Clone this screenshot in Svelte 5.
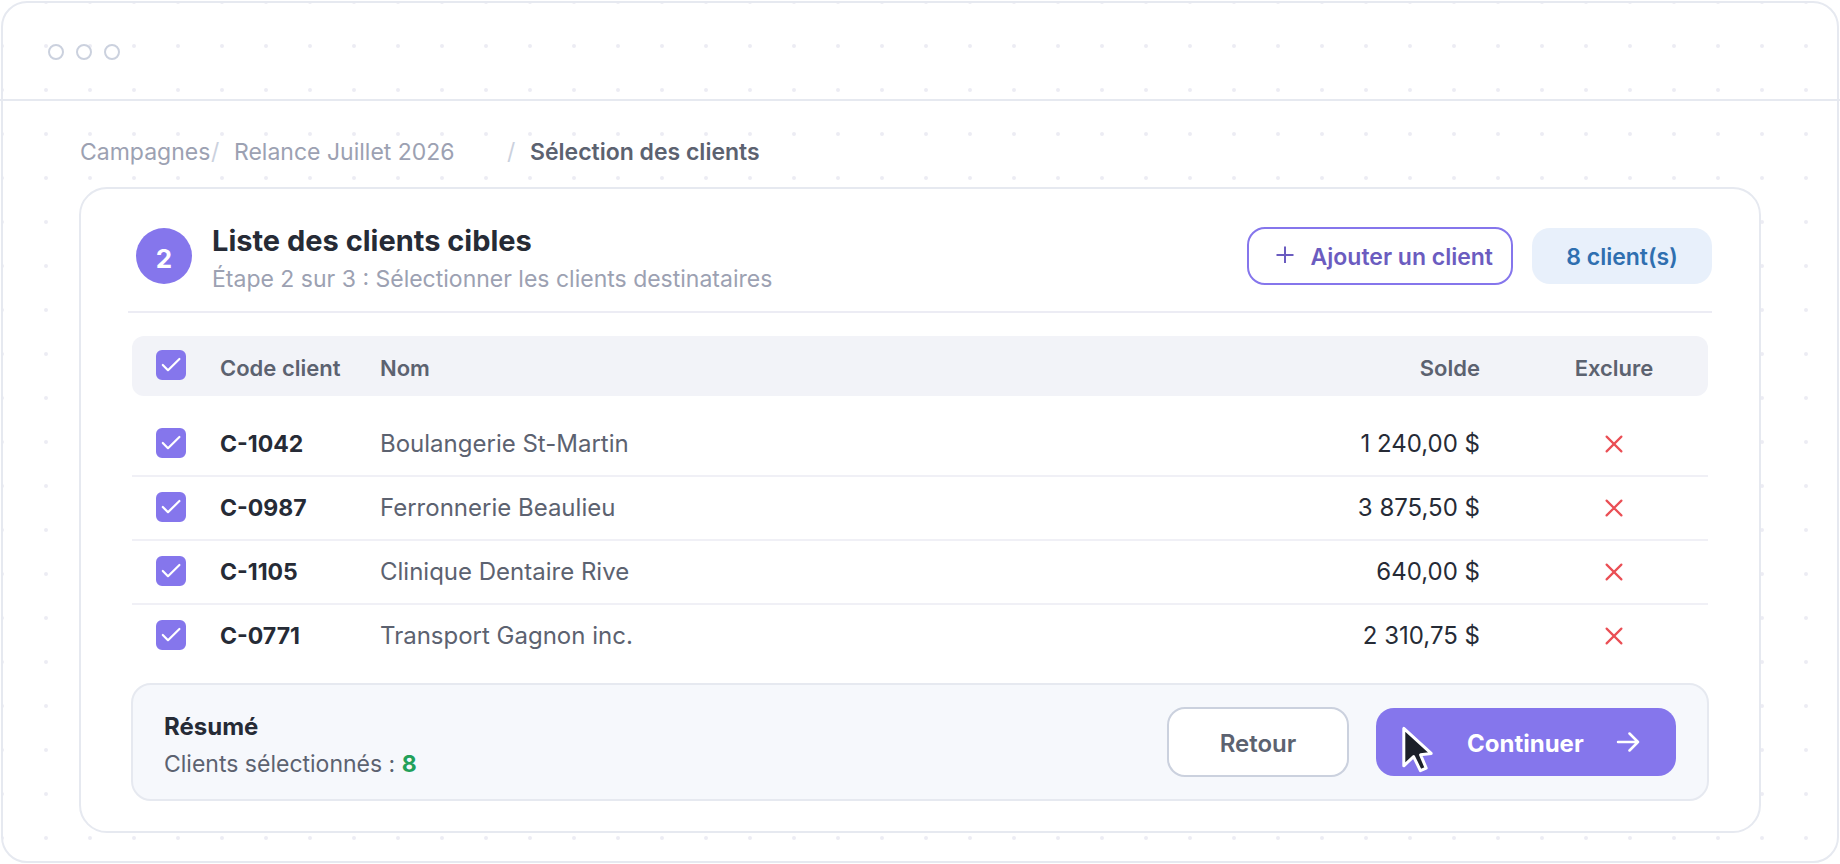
<script>
  let clients = $state([
    { code: 'C-1042', nom: 'Boulangerie St-Martin', solde: '1 240,00 $', selected: true },
    { code: 'C-0987', nom: 'Ferronnerie Beaulieu', solde: '3 875,50 $', selected: true },
    { code: 'C-1105', nom: 'Clinique Dentaire Rive', solde: '640,00 $', selected: true },
    { code: 'C-0771', nom: 'Transport Gagnon inc.', solde: '2 310,75 $', selected: true }
  ]);
  const total = 8;

  let allSelected = $derived(clients.every((c) => c.selected));

  function toggleAll(event) {
    const value = event.currentTarget.checked;
    for (const c of clients) c.selected = value;
  }

  function exclude(code) {
    clients = clients.filter((c) => c.code !== code);
  }
</script>

<div class="window">
  <header class="titlebar">
    <span class="light"></span>
    <span class="light"></span>
    <span class="light"></span>
  </header>

  <main>
    <nav class="crumbs">
      <a class="first" href="#campagnes">Campagnes</a>
      <span class="sep">/</span>
      <a class="second" href="#relance">Relance Juillet 2026</a>
      <span class="sep">/</span>
      <span class="current">Sélection des clients</span>
    </nav>

    <section class="card">
      <div class="card-head">
        <span class="step">2</span>
        <div class="titles">
          <h1>Liste des clients cibles</h1>
          <p>Étape 2 sur 3 : Sélectionner les clients destinataires</p>
        </div>
        <button class="add" type="button">
          <svg width="18" height="20" viewBox="0 0 18 20" fill="none" stroke="currentColor" stroke-width="2">
            <path d="M9 0.5V17M0.5 9H17.5" />
          </svg>
          <span class="label">Ajouter un client</span>
        </button>
        <span class="count">{total} client(s)</span>
      </div>

      <table>
        <thead>
          <tr>
            <th class="check">
              <input type="checkbox" aria-labelledby="col-code" checked={allSelected} onchange={toggleAll} />
            </th>
            <th class="code" id="col-code">Code client</th>
            <th class="nom">Nom</th>
            <th class="solde">Solde</th>
            <th class="exclure" id="col-exclure">Exclure</th>
          </tr>
        </thead>
        <tbody>
          {#each clients as client (client.code)}
            <tr>
              <td class="check">
                <input type="checkbox" aria-labelledby={client.code} bind:checked={client.selected} />
              </td>
              <td class="code" id={client.code}>{client.code}</td>
              <td class="nom">{client.nom}</td>
              <td class="solde">{client.solde}</td>
              <td class="exclure">
                <button
                  class="remove"
                  type="button"
                  aria-labelledby="col-exclure {client.code}"
                  onclick={() => exclude(client.code)}
                >
                  <svg width="18" height="18" viewBox="0 0 18 18" fill="none" stroke="currentColor" stroke-width="2.2" stroke-linecap="round">
                    <path d="M1.6 1.6L16.4 16.4M16.4 1.6L1.6 16.4" />
                  </svg>
                </button>
              </td>
            </tr>
          {/each}
        </tbody>
      </table>

      <footer class="summary">
        <div class="recap">
          <h2>Résumé</h2>
          <p>Clients sélectionnés : <strong>{total}</strong></p>
        </div>
        <button class="back" type="button"><span class="label">Retour</span></button>
        <button class="next" type="button">
          <span class="label">Continuer</span>
          <svg class="arrow" width="24" height="20" viewBox="0 0 24 20" fill="none" stroke="currentColor" stroke-width="2.5" stroke-linecap="round" stroke-linejoin="round">
            <path d="M2 10H22M13.5 1.5L22 10L13.5 18.5" />
          </svg>
          <svg class="pointer" width="36" height="50" viewBox="0 0 36 50" fill="#1c2029" stroke="#ffffff" stroke-width="3" stroke-linejoin="round">
            <path d="M3.8 4.4V41.8L13.6 32.6L20.4 46.6L26.2 44.2L20.6 30.8L31.2 29.4Z" />
          </svg>
        </button>
      </footer>
    </section>
  </main>
</div>

<style>
  :global(body) {
    background: #ffffff;
    font-family: Inter, 'Liberation Sans', sans-serif;
    color: #262b36;
  }

  * {
    box-sizing: border-box;
  }

  h1,
  h2,
  p {
    margin: 0;
  }

  button {
    font-family: inherit;
    cursor: pointer;
  }

  svg {
    display: block;
    flex: none;
  }

  .window {
    min-height: calc(100vh - 2px);
    margin: 1px;
    border: 2px solid #e6e9f0;
    border-radius: 26px;
    background-color: #ffffff;
    background-image: url("data:image/svg+xml,%3Csvg xmlns='http://www.w3.org/2000/svg' width='44' height='44'%3E%3Ccircle cx='22' cy='22' r='2' fill='%23ececf4'/%3E%3C/svg%3E");
    background-position: 21px 21px;
  }

  .titlebar {
    display: flex;
    gap: 12px;
    margin: 0 -3px;
    padding: 41px 48px 39px;
    border-bottom: 2px solid #e6e9f0;
  }

  .light {
    width: 16px;
    height: 16px;
    border: 2px solid #cbd1de;
    border-radius: 50%;
  }

  main {
    padding: 0 76px 28px;
  }

  .crumbs {
    display: flex;
    padding: 36px 1px 20px;
    font-size: 23px;
    line-height: 30px;
    color: #9ca1b2;
  }

  .crumbs a {
    color: inherit;
    text-decoration: none;
    white-space: nowrap;
  }

  .first {
    min-width: 131px;
  }

  .second {
    min-width: 273px;
  }

  .sep {
    width: 23px;
    color: #cbd1de;
  }

  .current {
    font-weight: 600;
    color: #5c6270;
  }

  .card {
    padding: 0 47px 30px;
    border: 2px solid #e6e9f0;
    border-radius: 28px;
    background: #ffffff;
  }

  .card-head {
    display: flex;
    align-items: center;
    padding: 28px 0 16px 8px;
    border-bottom: 2px solid #ececf4;
  }

  .step {
    display: grid;
    place-items: center;
    width: 56px;
    height: 56px;
    padding-top: 4px;
    border-radius: 50%;
    background: #8576ec;
    color: #ffffff;
    font-size: 26px;
    font-weight: 700;
  }

  .titles {
    flex: 1;
    padding: 4px 0 0 20px;
  }

  h1 {
    margin-bottom: 2px;
    font-size: 29px;
    font-weight: 700;
    line-height: 40px;
  }

  .titles p {
    font-size: 23px;
    line-height: 32px;
    color: #9ca1b2;
  }

  .label {
    padding-top: 2px;
  }

  .add {
    display: flex;
    align-items: center;
    justify-content: space-between;
    gap: 16px;
    min-width: 266px;
    height: 58px;
    margin-right: 19px;
    padding: 0 18px 0 27px;
    border: 2px solid #8576ec;
    border-radius: 18px;
    background: #ffffff;
    color: #6b5cc0;
    font-size: 23px;
    font-weight: 600;
  }

  .count {
    display: grid;
    place-items: center;
    min-width: 180px;
    height: 56px;
    padding-top: 2px;
    border-radius: 18px;
    background: #e8f0fb;
    color: #2f6fb0;
    font-size: 23px;
    font-weight: 600;
  }

  table {
    width: calc(100% - 8px);
    margin: 23px 4px 0;
    border-spacing: 0;
    table-layout: fixed;
    font-size: 24px;
  }

  th,
  td {
    padding: 0;
    text-align: left;
  }

  th {
    height: 60px;
    padding-top: 4px;
    background: #f2f3f8;
    color: #5c6270;
    font-size: 22px;
    font-weight: 600;
  }

  th:first-child {
    padding-top: 0;
    border-radius: 12px 0 0 12px;
  }

  th:last-child {
    border-radius: 0 12px 12px 0;
  }

  tbody::before {
    content: '';
    display: block;
    height: 17px;
  }

  td {
    height: 64px;
    border-bottom: 2px solid #f0f0f6;
  }

  tr:last-child td {
    height: 62px;
    border-bottom: 0;
  }

  th.check,
  td.check {
    width: 88px;
    padding-left: 24px;
  }

  .code {
    width: 160px;
  }

  td.code {
    font-size: 23px;
    font-weight: 700;
  }

  td.nom,
  td.solde {
    padding-bottom: 2px;
  }

  td.nom {
    color: #5c6270;
  }

  th.solde,
  td.solde {
    width: 260px;
    padding-right: 40px;
    text-align: right;
  }

  th.exclure,
  td.exclure {
    width: 188px;
    text-align: center;
  }

  input {
    display: block;
    appearance: none;
    width: 30px;
    height: 30px;
    margin: 0 0 2px;
    border: 2px solid #8576ec;
    border-radius: 6px;
    background: #ffffff;
  }

  input:checked {
    background: #8576ec
      url("data:image/svg+xml,%3Csvg xmlns='http://www.w3.org/2000/svg' width='30' height='30' fill='none' stroke='white' stroke-width='2.2' stroke-linecap='round' stroke-linejoin='round'%3E%3Cpath d='M6.8 15L12 20.2L23.4 9'/%3E%3C/svg%3E")
      center / 30px 30px no-repeat border-box;
  }

  .remove {
    display: block;
    margin: 0 auto;
    padding: 0;
    border: 0;
    background: none;
    color: #ea4f55;
  }

  .summary {
    display: flex;
    align-items: center;
    margin: 16px 3px 0;
    padding: 16px 31px;
    border: 2px solid #e6e9f0;
    border-radius: 20px;
    background: #f6f8fc;
  }

  .recap {
    flex: 1;
    padding-top: 8px;
    font-size: 23px;
    line-height: 38px;
    color: #5c6270;
  }

  h2 {
    font-size: 24px;
    font-weight: 700;
    line-height: 36px;
    color: #262b36;
  }

  strong {
    font-weight: 700;
    color: #22a05a;
  }

  .back,
  .next {
    border-radius: 18px;
    font-size: 24px;
  }

  .back {
    display: grid;
    place-items: center;
    min-width: 182px;
    height: 70px;
    margin-right: 27px;
    border: 2px solid #cbd1de;
    background: #ffffff;
    color: #5c6270;
    font-weight: 600;
  }

  .next {
    position: relative;
    display: flex;
    align-items: center;
    justify-content: space-between;
    min-width: 300px;
    height: 68px;
    padding: 0 36px 0 91px;
    border: 0;
    background: #8576ec;
    color: #ffffff;
    font-weight: 700;
  }

  .pointer {
    position: absolute;
    top: 16px;
    left: 24px;
  }
</style>
